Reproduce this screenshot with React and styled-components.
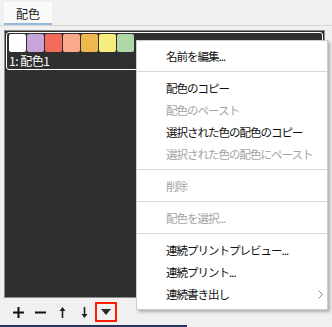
import React from 'react';
import styled, { createGlobalStyle } from 'styled-components';

const GlobalStyle = createGlobalStyle`
  html, body {
    margin: 0;
    padding: 0;
    background: #f0f0f0;
  }
  body {
    font-family: "Noto Sans CJK JP", "Noto Sans", sans-serif;
    font-size: 12px;
  }
`;

const Window = styled.div`
  position: relative;
  width: 332px;
  height: 327px;
  display: flex;
  flex-direction: column;
  background: #f0f0f0;
  overflow: hidden;
`;

const TabBar = styled.div`
  display: flex;
  align-items: flex-end;
  height: 25px;
  padding-left: 4px;
  border-bottom: 1px solid #d6d6d6;
`;

const Tab = styled.div`
  width: 48px;
  height: 23px;
  box-sizing: border-box;
  display: flex;
  align-items: center;
  justify-content: center;
  padding-top: 2px;
  background: #fafafa;
  border-bottom: 2px solid #92b9e0;
  color: #1a1a1a;
  font-size: 12px;
`;

const Panel = styled.div`
  margin: 4px 7px 0 4px;
  height: 270px;
  box-sizing: border-box;
  padding: 1px;
  background: #2f2f2f;
  border: 1px solid #8c8c8c;
`;

const SchemeItem = styled.div`
  border: 1px solid ${(p) => (p.selected ? '#ffffff' : 'transparent')};
  border-radius: 3px;
  padding: 1px 1px 2px 2px;
`;

const SwatchRow = styled.div`
  display: flex;
  gap: 1px;
`;

const Swatch = styled.div`
  width: 17px;
  height: 18px;
  border-radius: 2px;
  background: ${(p) => p.color};
`;

const SchemeLabel = styled.div`
  margin-top: 2px;
  color: #ffffff;
  font-size: 12px;
  line-height: 13px;
  letter-spacing: -0.5px;
`;

const Toolbar = styled.div`
  display: flex;
  align-items: flex-start;
  height: 23px;
  padding: 4px 0 0 7px;
  border-bottom: 2px solid #24365f;
  width: 180px;
`;

const ToolButton = styled.div`
  width: 22px;
  height: 20px;
  box-sizing: border-box;
  display: flex;
  align-items: center;
  justify-content: center;
  border: 2px solid ${(p) => (p.highlight ? '#ff1e00' : 'transparent')};
`;

const Menu = styled.div`
  position: absolute;
  left: 136px;
  top: 40px;
  width: 192px;
  box-sizing: border-box;
  padding: 4px 0;
  background: #ffffff;
  border: 1px solid #cdcdcd;
  box-shadow: 2px 2px 3px rgba(0, 0, 0, 0.28);
`;

const MenuItem = styled.div`
  display: flex;
  align-items: center;
  justify-content: space-between;
  height: 22px;
  padding: 0 4px 0 29px;
  color: ${(p) => (p.disabled ? '#a3a3a3' : '#111111')};
  font-size: 11.5px;
  letter-spacing: -1px;
  white-space: nowrap;
`;

const Separator = styled.div`
  height: 1px;
  margin: 4px 0 5px;
  background: #d9d9d9;
`;

const colors = ['#ffffff', '#c8a5d9', '#f36a5a', '#f8aa8a', '#efb84e', '#f6ee7c', '#afd8a6'];

const Chevron = () => (
  <svg width="5" height="9" viewBox="0 0 5 9">
    <path d="M0.5 0.5 L4.5 4.5 L0.5 8.5" fill="none" stroke="#888" strokeWidth="1" />
  </svg>
);

const PlusIcon = () => (
  <svg width="11" height="11" viewBox="0 0 11 11">
    <path d="M5.5 0 V11 M0 5.5 H11" stroke="#111" strokeWidth="2" />
  </svg>
);

const MinusIcon = () => (
  <svg width="11" height="11" viewBox="0 0 11 11">
    <path d="M0 5.5 H11" stroke="#111" strokeWidth="2" />
  </svg>
);

const UpIcon = () => (
  <svg width="7" height="11" viewBox="0 0 7 11">
    <path d="M3.5 2 V11" stroke="#222" strokeWidth="1.6" />
    <path d="M0.5 4 L3.5 0 L6.5 4 Z" fill="#222" />
  </svg>
);

const DownIcon = () => (
  <svg width="7" height="11" viewBox="0 0 7 11">
    <path d="M3.5 0 V9" stroke="#222" strokeWidth="1.6" />
    <path d="M0.5 7 L3.5 11 L6.5 7 Z" fill="#222" />
  </svg>
);

const DropIcon = () => (
  <svg width="10" height="6" viewBox="0 0 10 6">
    <path d="M0 0 H10 L5 6 Z" fill="#2a2a2a" />
  </svg>
);

const menu = [
  { label: '名前を編集...' },
  { sep: true },
  { label: '配色のコピー' },
  { label: '配色のペースト', disabled: true },
  { label: '選択された色の配色のコピー' },
  { label: '選択された色の配色にペースト', disabled: true },
  { sep: true },
  { label: '削除', disabled: true },
  { sep: true },
  { label: '配色を選択...', disabled: true },
  { sep: true },
  { label: '連続プリントプレビュー...' },
  { label: '連続プリント...' },
  { label: '連続書き出し', sub: true },
];

export default function App() {
  return (
    <Window>
      <GlobalStyle />
      <TabBar>
        <Tab>配色</Tab>
      </TabBar>
      <Panel>
        <SchemeItem selected>
          <SwatchRow>
            {colors.map((c) => (
              <Swatch key={c} color={c} />
            ))}
          </SwatchRow>
          <SchemeLabel>1: 配色1</SchemeLabel>
        </SchemeItem>
      </Panel>
      <Toolbar>
        <ToolButton><PlusIcon /></ToolButton>
        <ToolButton><MinusIcon /></ToolButton>
        <ToolButton><UpIcon /></ToolButton>
        <ToolButton><DownIcon /></ToolButton>
        <ToolButton highlight><DropIcon /></ToolButton>
      </Toolbar>
      <Menu>
        {menu.map((m, i) =>
          m.sep ? (
            <Separator key={i} />
          ) : (
            <MenuItem key={i} disabled={m.disabled}>
              <span>{m.label}</span>
              {m.sub && <Chevron />}
            </MenuItem>
          )
        )}
      </Menu>
    </Window>
  );
}
